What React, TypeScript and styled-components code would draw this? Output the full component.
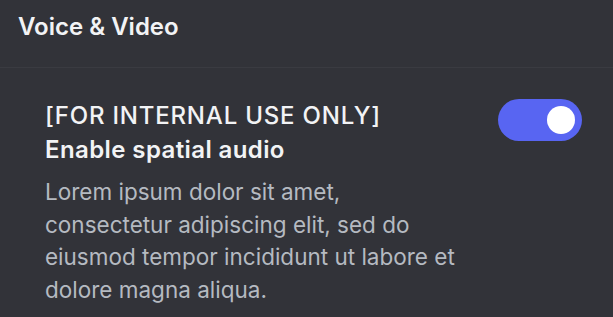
import React, { useState } from "react";
import styled, { createGlobalStyle } from "styled-components";

const Global = createGlobalStyle`
  html, body { margin: 0; padding: 0; background: #323339; }
  body { font-family: Inter, "Noto Sans", sans-serif; }
`;

const Page = styled.div`
  width: 613px;
  height: 317px;
  background: #323339;
  overflow: hidden;
  display: flex;
  flex-direction: column;
`;

const Header = styled.div`
  height: 68px;
  box-sizing: border-box;
  border-bottom: 1px solid #3a3b41;
  padding: 11px 18px 0;
  color: #f2f3f5;
  font-size: 24px;
  font-weight: 600;
  line-height: 32px;
`;

const Row = styled.div`
  display: flex;
  align-items: flex-start;
  justify-content: space-between;
  padding: 31px 31px 0 45px;
`;

const TextCol = styled.div`
  display: flex;
  flex-direction: column;
`;

const Title = styled.div<{ $weight: number; $spacing: number }>`
  color: #f2f3f5;
  font-size: 24px;
  font-weight: ${(p) => p.$weight};
  letter-spacing: ${(p) => p.$spacing}px;
  line-height: 34px;
  white-space: nowrap;
`;

const Description = styled.div`
  margin-top: 9px;
  color: #b5bac1;
  font-size: 22.5px;
  line-height: 32.7px;
  white-space: nowrap;
`;

const Switch = styled.button<{ $on: boolean }>`
  width: 84px;
  height: 42px;
  border: none;
  border-radius: 21px;
  padding: 0 7px;
  background: ${(p) => (p.$on ? "#5865f2" : "#80848e")};
  display: flex;
  align-items: center;
  justify-content: ${(p) => (p.$on ? "flex-end" : "flex-start")};
  cursor: pointer;
  flex-shrink: 0;
`;

const Knob = styled.span`
  width: 28px;
  height: 28px;
  border-radius: 50%;
  background: #ffffff;
`;

const lines = [
  "Lorem ipsum dolor sit amet,",
  "consectetur adipiscing elit, sed do",
  "eiusmod tempor incididunt ut labore et",
  "dolore magna aliqua.",
];

export default function App() {
  const [on, setOn] = useState(true);
  return (
    <Page>
      <Global />
      <Header>Voice &amp; Video</Header>
      <Row>
        <TextCol>
          <Title $weight={500} $spacing={0.8}>[FOR INTERNAL USE ONLY]</Title>
          <Title $weight={600} $spacing={0.4}>Enable spatial audio</Title>
          <Description>
            {lines.map((l, i) => (
              <React.Fragment key={i}>
                {l}
                {i < lines.length - 1 && <br />}
              </React.Fragment>
            ))}
          </Description>
        </TextCol>
        <Switch $on={on} onClick={() => setOn(!on)} aria-label="toggle">
          <Knob />
        </Switch>
      </Row>
    </Page>
  );
}
